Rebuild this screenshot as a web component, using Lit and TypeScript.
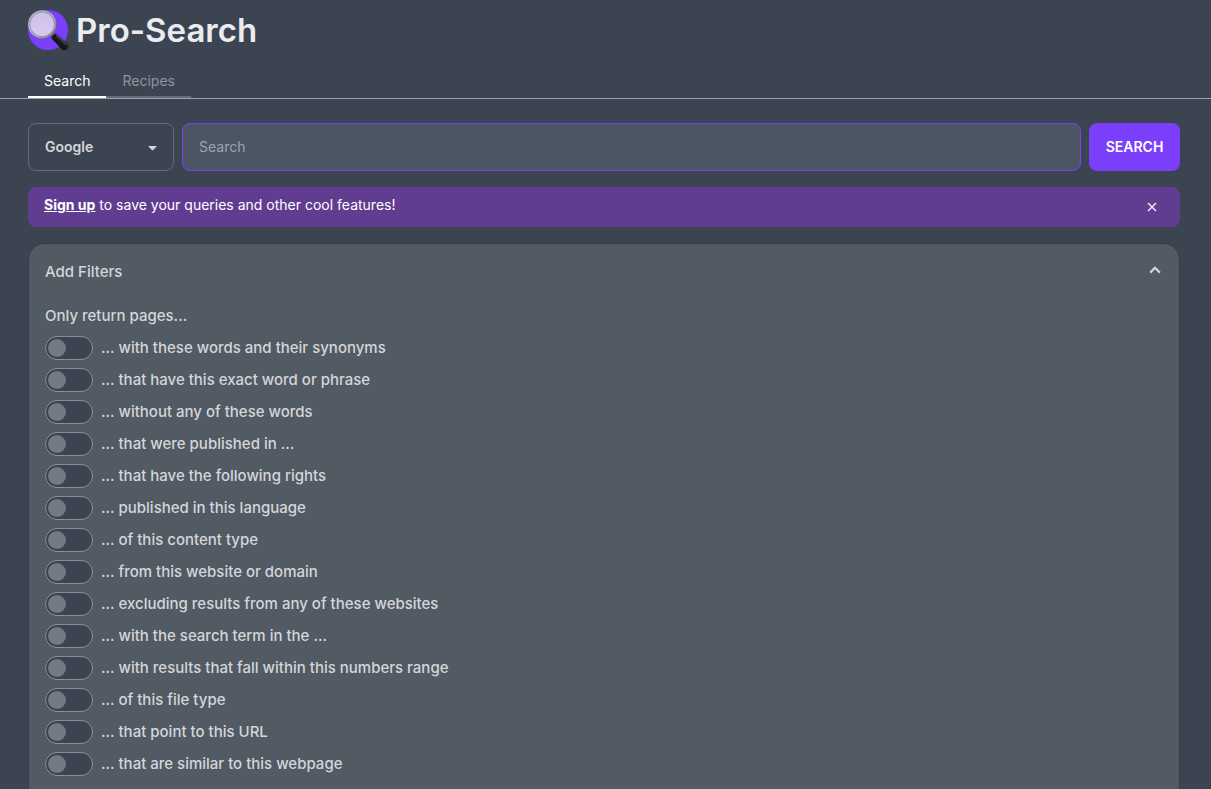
import { LitElement, html, css, svg } from "lit";
import { customElement, state } from "lit/decorators.js";

const FILTERS = [
  "with these words and their synonyms",
  "that have this exact word or phrase",
  "without any of these words",
  "that were published in ...",
  "that have the following rights",
  "published in this language",
  "of this content type",
  "from this website or domain",
  "excluding results from any of these websites",
  "with the search term in the ...",
  "with results that fall within this numbers range",
  "of this file type",
  "that point to this URL",
  "that are similar to this webpage",
];

const logo = svg`
  <defs>
    <linearGradient id="rim" x1="0" y1="0" x2="1" y2="1">
      <stop offset="0" stop-color="#8fb0c4" />
      <stop offset="0.5" stop-color="#a9a4b0" />
      <stop offset="1" stop-color="#55535c" />
    </linearGradient>
    <linearGradient id="grip" x1="0" y1="1" x2="1" y2="0">
      <stop offset="0.2" stop-color="#0c0c0e" />
      <stop offset="0.6" stop-color="#1d1e20" />
      <stop offset="1" stop-color="#4a4c4e" />
    </linearGradient>
    <linearGradient id="glass" x1="0" y1="0" x2="0" y2="1">
      <stop offset="0" stop-color="#cfc0e6" />
      <stop offset="1" stop-color="#d9c8f6" />
    </linearGradient>
  </defs>
  <circle cx="20" cy="20" r="20" fill="#7b3ffc" />
  <path d="M22.5 22.5 L28 28" stroke="#77757c" stroke-width="3.4" />
  <path d="M28.2 24 L39.4 33.6 Q41.4 36 39.8 38.2 L38.4 39.6 Q36.2 41.2 34 39.4 L23.8 28.8 Q23 27.2 24.4 25.6 L25.8 24.2 Q27 23.2 28.2 24 Z" fill="url(#grip)" />
  <path d="M28.4 25.6 L38.2 34.4" stroke="#66686b" stroke-width="1" stroke-linecap="round" />
  <circle cx="14.2" cy="14.4" r="13.2" fill="url(#glass)" stroke="url(#rim)" stroke-width="2" />
  <circle cx="14.2" cy="14.4" r="12.3" fill="none" stroke="#857f8c" stroke-width="0.6" />
  <circle cx="14.2" cy="14.4" r="13.3" fill="none" stroke="#c6c9ce" stroke-width="0.5" />
`;

@customElement("app-root")
export class AppRoot extends LitElement {
  static styles = css`
    :host {
      display: block;
      height: 100vh;
      overflow-y: auto;
      scrollbar-width: none;
      background: #3d4451;
      color: #d3d6db;
      font-family: Inter, "Liberation Sans", sans-serif;
      font-size: 15px;
      line-height: 24px;
    }
    * {
      box-sizing: border-box;
    }
    button,
    select,
    input {
      font: inherit;
      color: inherit;
      margin: 0;
    }
    .header {
      border-bottom: 1px solid #9ca3af;
      padding: 10px 28px 0;
    }
    .brand {
      display: flex;
      align-items: center;
      gap: 8px;
      height: 40px;
    }
    .logo {
      width: 40px;
      height: 40px;
      overflow: visible;
    }
    .title {
      margin: 0;
      font-size: 33px;
      line-height: 40px;
      font-weight: 600;
      color: #ebecf0;
    }
    .tabs {
      display: flex;
      margin-top: 16px;
    }
    .tab {
      padding: 0 16px;
      height: 32px;
      line-height: 30px;
      font-size: 14px;
      text-decoration: none;
      color: #8f949d;
      border-bottom: 2px solid #666c77;
    }
    .tab.active {
      color: #ffffff;
      border-color: #ffffff;
    }
    .main {
      padding: 24px 31px 0 28px;
      display: flex;
      flex-direction: column;
      gap: 16px;
    }
    .search {
      display: flex;
      gap: 8px;
      height: 48px;
    }
    .engine {
      position: relative;
      width: 146px;
    }
    .engine select {
      appearance: none;
      width: 100%;
      height: 100%;
      padding: 0 40px 0 16px;
      border: 1px solid #646a76;
      border-radius: 8px;
      background: none;
      font-size: 14px;
      font-weight: 600;
    }
    .caret {
      position: absolute;
      right: 17px;
      top: 23px;
      width: 9px;
      height: 5px;
      pointer-events: none;
    }
    .query {
      flex: 1;
      min-width: 0;
      padding: 0 16px;
      border: 1px solid #7b3ffc;
      border-radius: 8px;
      background: #4b5563;
      font-size: 14px;
      outline: none;
    }
    .query::placeholder {
      color: #9ca3af;
      opacity: 1;
    }
    .submit {
      border: 0;
      border-radius: 8px;
      padding: 0 16px;
      min-width: 91px;
      background: #7b3ffc;
      color: #ffffff;
      font-size: 14px;
      font-weight: 600;
    }
    .banner {
      display: flex;
      justify-content: space-between;
      align-items: center;
      height: 40px;
      padding: 0 16px;
      border-radius: 8px;
      background: #613d91;
      color: #ffffff;
      font-size: 14px;
    }
    .banner p {
      margin: 0 0 4px;
    }
    .banner a {
      color: inherit;
      font-weight: 700;
    }
    .icon {
      display: grid;
      place-items: center;
      width: 24px;
      height: 24px;
      padding: 0;
      border: 0;
      background: none;
    }
    .panel {
      border: 1px solid #353c49;
      border-radius: 16px;
      background: #525a63;
      padding: 16px 16px 32px;
      font-weight: 500;
    }
    .panel-head {
      display: flex;
      justify-content: space-between;
    }
    .panel-head h2 {
      margin: 0;
      font-size: 15px;
      font-weight: 500;
    }
    .panel-head .icon {
      width: 16px;
      height: 20px;
    }
    .lead {
      margin: 20px 0 8px;
    }
    .filters {
      list-style: none;
      margin: 0;
      padding: 0;
      display: grid;
      gap: 8px;
    }
    .filter {
      display: flex;
      align-items: center;
      gap: 8px;
    }
    .toggle {
      appearance: none;
      width: 48px;
      height: 24px;
      padding: 2px;
      border: 1px solid #8b9098;
      border-radius: 12px;
      background: #3d4451;
      display: flex;
    }
    .toggle::before {
      content: "";
      width: 18px;
      height: 18px;
      border-radius: 50%;
      background: #747985;
    }
    .toggle:checked {
      justify-content: flex-end;
    }
    .toggle:checked::before {
      background: #ffffff;
    }
  `;

  @state() private bannerOpen = true;
  @state() private filtersOpen = true;

  render() {
    return html`
      <header class="header">
        <div class="brand">
          <svg class="logo" viewBox="0 0 40 40" aria-hidden="true">${logo}</svg>
          <h1 class="title">Pro-Search</h1>
        </div>
        <nav class="tabs">
          <a class="tab active" href="#search">Search</a>
          <a class="tab" href="#recipes">Recipes</a>
        </nav>
      </header>
      <main class="main">
        <form class="search" @submit=${(e: Event) => e.preventDefault()}>
          <div class="engine">
            <select aria-label="Search engine">
              <option>Google</option>
            </select>
            <svg class="caret" viewBox="0 0 9 5" aria-hidden="true">
              <path d="M1 0h7q1 0 .4.8L5.2 4.1q-.7.6-1.4 0L.6.8Q0 0 1 0z" fill="#d3d6db" />
            </svg>
          </div>
          <input class="query" type="text" placeholder="Search" aria-label="Search" />
          <button class="submit" type="submit">SEARCH</button>
        </form>
        ${this.bannerOpen
          ? html`<div class="banner">
              <p><a href="#signup">Sign up</a> to save your queries and other cool features!</p>
              <button class="icon" aria-label="Dismiss" @click=${() => (this.bannerOpen = false)}>
                <svg width="10" height="10" viewBox="0 0 10 10">
                  <path d="M1 1l8 8M9 1l-8 8" stroke="#efeaf5" stroke-width="1.5" fill="none" />
                </svg>
              </button>
            </div>`
          : null}
        <section class="panel">
          <div class="panel-head">
            <h2>Add Filters</h2>
            <button
              class="icon"
              aria-label="Toggle filters"
              aria-expanded=${this.filtersOpen}
              @click=${() => (this.filtersOpen = !this.filtersOpen)}
            >
              <svg width="12" height="8" viewBox="0 0 12 8">
                <path d="M1.2 6.6L6 1.8l4.8 4.8" stroke="#d3d6db" stroke-width="2.2" fill="none" />
              </svg>
            </button>
          </div>
          ${this.filtersOpen
            ? html`<p class="lead">Only return pages...</p>
                <ul class="filters">
                  ${FILTERS.map(
                    (text, i) => html`<li class="filter">
                      <input class="toggle" type="checkbox" id="filter-${i}" />
                      <label for="filter-${i}">... ${text}</label>
                    </li>`
                  )}
                </ul>`
            : null}
        </section>
      </main>
    `;
  }
}
